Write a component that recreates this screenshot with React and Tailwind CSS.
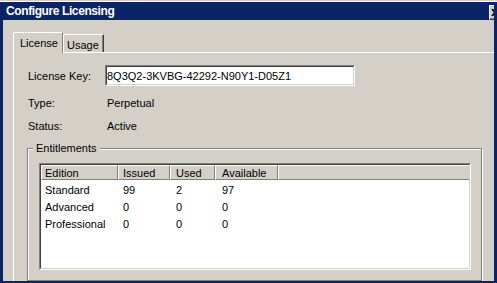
import React from "react";

const columns = [
    { key: "edition", label: "Edition", width: "w-[77px]", head: "pl-[3px]", cell: "pl-[4px]" },
    { key: "issued", label: "Issued", width: "w-[52px]", head: "pl-[4px]", cell: "pl-[5px]" },
    { key: "used", label: "Used", width: "w-[45px]", head: "pl-[5px]", cell: "pl-[6px]" },
    { key: "available", label: "Available", width: "w-[63px]", head: "pl-[6px]", cell: "pl-[7px]" },
];

const entitlements = [
    { edition: "Standard", issued: 99, used: 2, available: 97 },
    { edition: "Advanced", issued: 0, used: 0, available: 0 },
    { edition: "Professional", issued: 0, used: 0, available: 0 },
];

function InfoRow({ label, value }) {
    return (
        <div className="flex items-center h-[23px]">
            <span className="w-[77px]">{label}</span>
            <span className="pl-[2px]">{value}</span>
        </div>
    );
}

export default function App() {
    return (
        <div className="w-[497px] h-[283px] overflow-hidden flex flex-col bg-[#0a246a] text-[11px] leading-[14px] text-black font-['Liberation_Sans',Arial,sans-serif]">
            <div className="h-px bg-[#d4d0c8]" />
            <div className="h-px bg-white" />

            {/* title bar */}
            <div className="h-[18px] flex items-center justify-between pl-[6px] pr-[3px]">
                <span className="text-white font-bold text-[12px] tracking-[-0.4px]">Configure Licensing</span>
                <div className="w-[5px] h-[15px] mt-[3px] overflow-hidden">
                    <div className="w-[16px] h-[15px] bg-[#d4d0c8] border-l border-t border-white border-b border-b-[#404040] shadow-[inset_0_-1px_0_#808080] flex items-center pl-[1px]">
                        <svg width="8" height="7" viewBox="0 0 8 7">
                            <path d="M1 0 L7 7 M7 0 L1 7" stroke="black" strokeWidth="1.8" fill="none" />
                        </svg>
                    </div>
                </div>
            </div>

            {/* window body */}
            <div className="flex-1 min-h-0 mx-[3px] mb-[2px] bg-[#d4d0c8] overflow-hidden flex flex-col pt-[11px] pl-[10px]">
                <div className="flex items-end h-[21px] shrink-0">
                    <div className="relative z-10 -mb-px h-[21px] w-[50px] flex items-center pl-[6px] bg-[#d4d0c8] border-l border-t border-white border-r border-r-[#808080] rounded-tl-[2px]">
                        License
                    </div>
                    <div className="h-[18px] w-[41px] flex items-center pl-[3px] pt-[2px] border-l border-t border-white border-r border-r-[#404040] shadow-[inset_-1px_0_0_#808080] rounded-tl-[2px]">
                        Usage
                    </div>
                </div>

                {/* tab page */}
                <div className="flex-1 border-l border-t border-white flex flex-col pl-[14px] pt-[12px]">
                    <div className="flex items-center h-[21px] shrink-0">
                        <span className="w-[77px]">License Key:</span>
                        <div className="w-[250px] h-[21px] border border-t-[#808080] border-l-[#808080] border-r-white border-b-white">
                            <div className="h-full bg-white border border-t-[#404040] border-l-[#404040] border-r-[#d4d0c8] border-b-[#d4d0c8] flex items-center">
                                8Q3Q2-3KVBG-42292-N90Y1-D05Z1
                            </div>
                        </div>
                    </div>
                    <div className="mt-[5px] shrink-0">
                        <InfoRow label="Type:" value="Perpetual" />
                        <InfoRow label="Status:" value="Active" />
                    </div>

                    {/* group box */}
                    <div className="relative shrink-0 mt-[11px] ml-[-1px] w-[455px] h-[133px] border border-[#808080] shadow-[inset_1px_1px_0_#fff,1px_1px_0_#fff] pl-[11px] pt-[14px] pr-[10px] pb-[10px] flex">
                        <span className="absolute left-[5px] top-[-8px] px-[3px] bg-[#d4d0c8]">Entitlements</span>

                        <div className="flex-1 border border-t-[#808080] border-l-[#808080] border-r-white border-b-white">
                            <div className="h-full bg-white border border-t-[#404040] border-l-[#404040] border-r-[#d4d0c8] border-b-[#d4d0c8] flex flex-col">
                                <div className="flex h-[15px] bg-[#d4d0c8]">
                                    {columns.map((col) => (
                                        <div key={col.key} className={`${col.width} ${col.head} h-full flex items-center border-l border-t border-white border-r border-r-[#808080] border-b border-b-[#808080]`}>
                                            {col.label}
                                        </div>
                                    ))}
                                    <div className="flex-1 h-full border-l border-t border-white border-b border-b-[#808080]" />
                                </div>
                                <div className="pt-[1px]">
                                    {entitlements.map((row) => (
                                        <div key={row.edition} className="flex h-[17px] items-center">
                                            {columns.map((col) => (
                                                <div key={col.key} className={`${col.width} ${col.cell}`}>
                                                    {row[col.key]}
                                                </div>
                                            ))}
                                        </div>
                                    ))}
                                </div>
                            </div>
                        </div>
                    </div>
                </div>
            </div>
        </div>
    );
}
